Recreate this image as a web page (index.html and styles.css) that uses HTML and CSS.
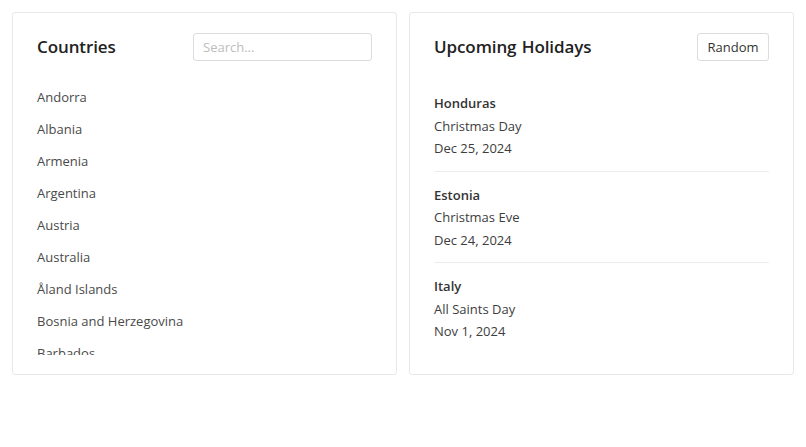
FILE: index.html
```html
<!DOCTYPE html>
<html>
<head>
<meta charset="utf-8">
<link rel="stylesheet" href="styles.css">
</head>
<body>
<div class="page">
  <section class="card">
    <div class="card-head">
      <h2 class="card-title">Countries</h2>
      <input class="search" type="text" placeholder="Search...">
    </div>
    <ul class="country-list">
      <li>Andorra</li>
      <li>Albania</li>
      <li>Armenia</li>
      <li>Argentina</li>
      <li>Austria</li>
      <li>Australia</li>
      <li>Åland Islands</li>
      <li>Bosnia and Herzegovina</li>
      <li>Barbados</li>
    </ul>
  </section>
  <section class="card">
    <div class="card-head">
      <h2 class="card-title">Upcoming Holidays</h2>
      <button class="btn">Random</button>
    </div>
    <div class="holidays">
      <div class="holiday">
        <div class="h-country">Honduras</div>
        <div class="h-line">Christmas Day</div>
        <div class="h-line">Dec 25, 2024</div>
      </div>
      <div class="holiday">
        <div class="h-country">Estonia</div>
        <div class="h-line">Christmas Eve</div>
        <div class="h-line">Dec 24, 2024</div>
      </div>
      <div class="holiday">
        <div class="h-country">Italy</div>
        <div class="h-line">All Saints Day</div>
        <div class="h-line">Nov 1, 2024</div>
      </div>
    </div>
  </section>
</div>
</body>
</html>
```
FILE: styles.css
```css
* { box-sizing: border-box; }
html, body { margin: 0; background: #fff; }
body {
  font-family: "Open Sans", "Noto Sans", sans-serif;
  color: #333;
}
.page {
  display: grid;
  grid-template-columns: 385px 385px;
  gap: 12px;
  padding: 12px;
}
.card {
  border: 1px solid #e8e8ec;
  border-radius: 3px;
  height: 363px;
  padding: 20px 24px 19px;
  display: flex;
  flex-direction: column;
}
.card-head {
  display: flex;
  align-items: center;
  justify-content: space-between;
  height: 27px;
}
.card-title {
  margin: 0;
  font-size: 17px;
  font-weight: 600;
  color: #222;
  letter-spacing: -0.1px;
  word-spacing: 1px;
}
.search {
  width: 179px;
  height: 28px;
  border: 1px solid #dcdce0;
  border-radius: 3px;
  padding: 0 9px;
  font-family: inherit;
  font-size: 13px;
  color: #333;
  outline: none;
}
.search::placeholder { color: #bdbdbd; }
.btn {
  height: 28px;
  width: 72px;
  border: 1px solid #dcdce0;
  border-radius: 3px;
  background: #fff;
  font-family: inherit;
  font-size: 13px;
  color: #333;
  padding: 0;
}
.country-list {
  list-style: none;
  margin: 21px 0 0;
  padding: 0;
  height: 274px;
  overflow: hidden;
}
.country-list li {
  height: 32px;
  line-height: 32px;
  font-size: 13px;
  color: #4a4a4a;
}
.holidays {
  margin-top: 20px;
}
.holiday {
  padding: 12px 0 11px;
  border-bottom: 1px solid #ececf0;
  font-size: 13px;
  line-height: 22.5px;
}
.holiday:last-child { border-bottom: none; }
.h-country {
  font-weight: 600;
  color: #333;
}
.h-line { color: #3d3d3d; }
```
